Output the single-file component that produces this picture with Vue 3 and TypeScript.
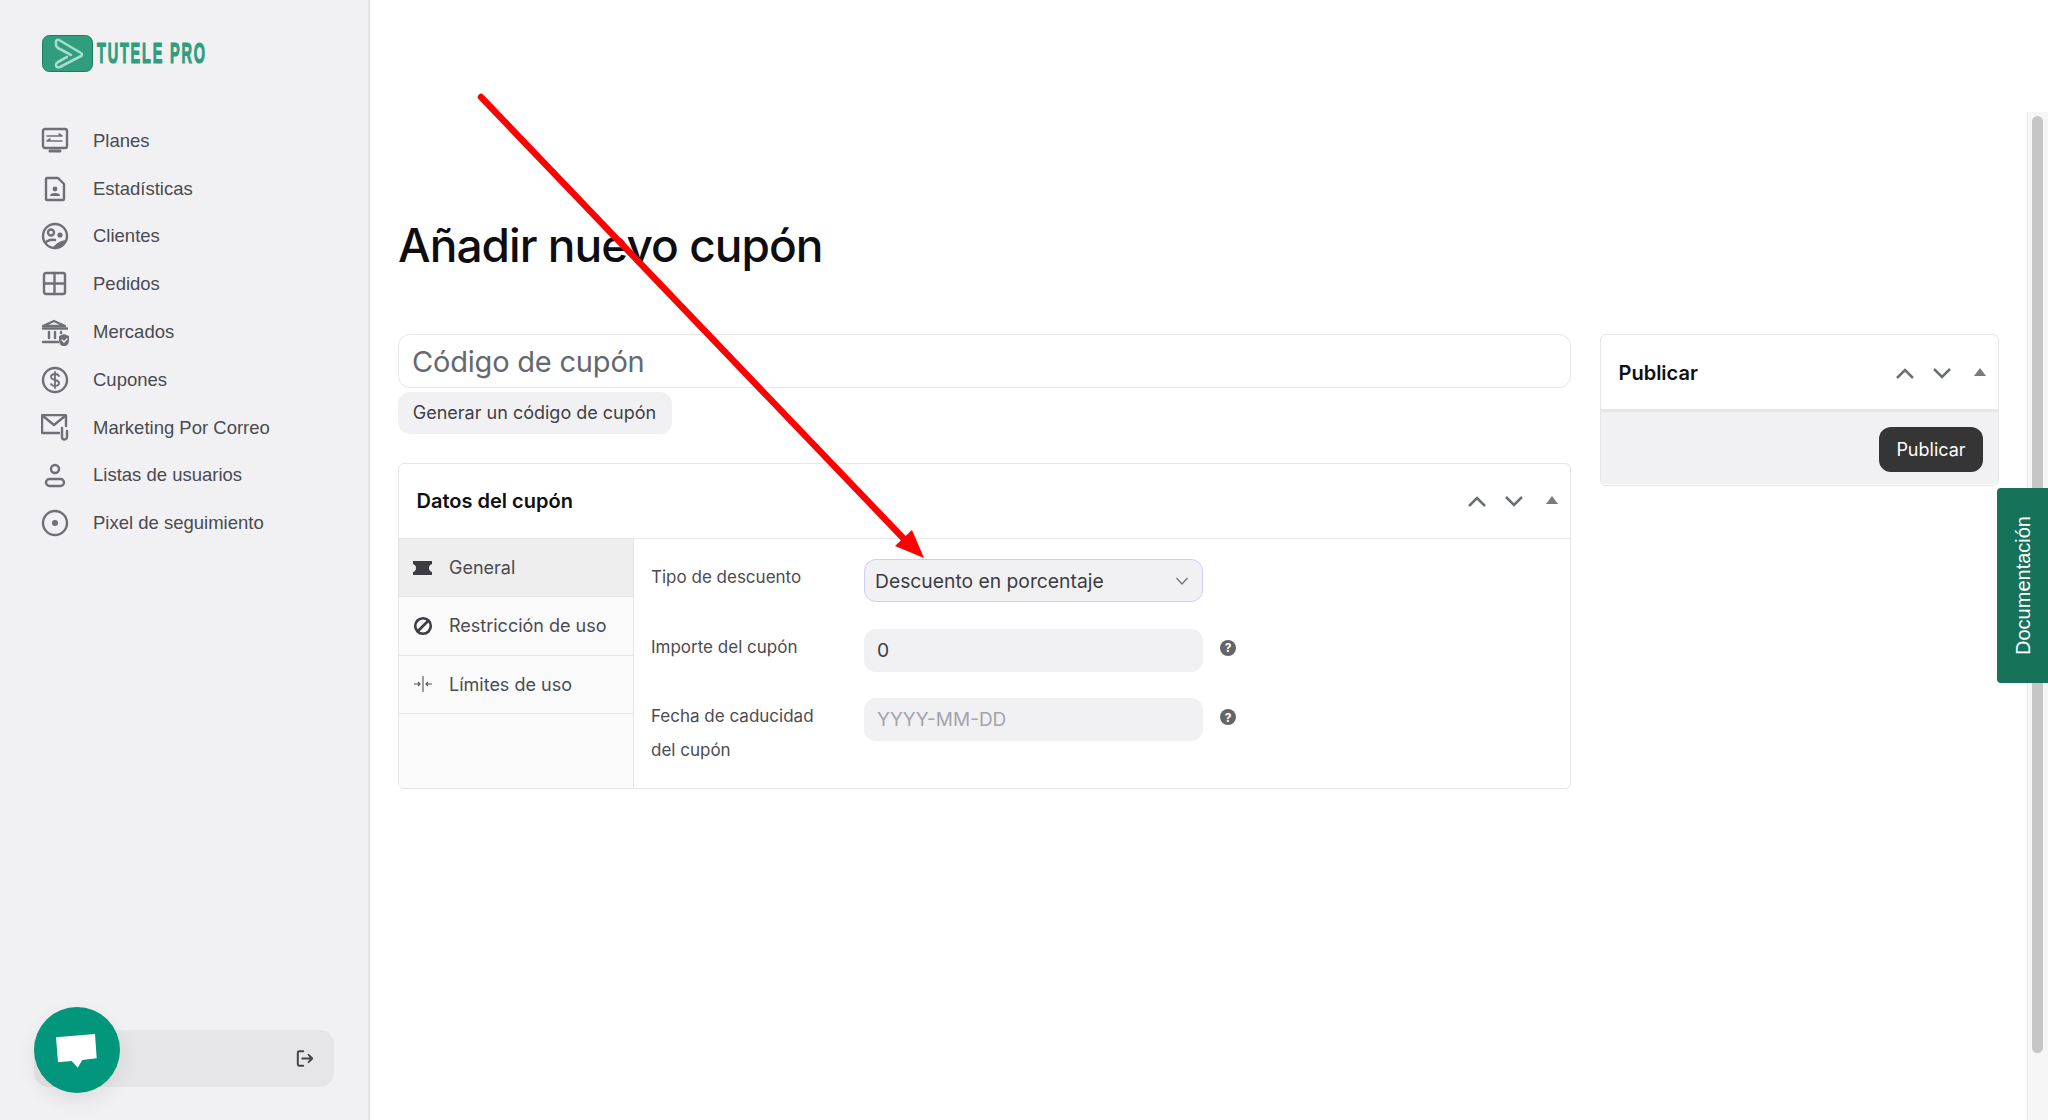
<script setup lang="ts">
const navItems = [
  { label: 'Planes', icon: 'plans' },
  { label: 'Estadísticas', icon: 'stats' },
  { label: 'Clientes', icon: 'clients' },
  { label: 'Pedidos', icon: 'orders' },
  { label: 'Mercados', icon: 'markets' },
  { label: 'Cupones', icon: 'coupons' },
  { label: 'Marketing Por Correo', icon: 'mail' },
  { label: 'Listas de usuarios', icon: 'users' },
  { label: 'Pixel de seguimiento', icon: 'pixel' }
]

const tabs = [
  { label: 'General', icon: 'ticket', active: true },
  { label: 'Restricción de uso', icon: 'ban', active: false },
  { label: 'Límites de uso', icon: 'limit', active: false }
]
</script>

<template>
  <div class="page">
    <aside class="sidebar">
      <div class="logo">
        <svg class="logo-mark" width="51" height="37" viewBox="0 0 51 37">
          <rect x="0.5" y="0.5" width="50" height="36" rx="7" fill="#2f9d7e" stroke="#1f7a60" />
          <path d="M29 20L16 13Q14 12 14 10V7Q14 4 17 5L39 18Q41 20 39 21L18 32Q14 33 14 30Q14 28 16 27L25 22" fill="none" stroke="#a9dcc9" stroke-width="2.600" stroke-linejoin="round" stroke-linecap="round" />
        </svg>
        <span class="logo-text">TUTELE PRO</span>
      </div>
      <nav class="nav">
        <a v-for="item in navItems" :key="item.label" class="nav-item">
          <span class="nav-icon">
            <svg width="28" height="28" viewBox="0 0 28 28" fill="none" stroke="#6f6f76" stroke-width="2.4" stroke-linecap="round" stroke-linejoin="round">
              <template v-if="item.icon === 'plans'">
                <rect x="2" y="2" width="24" height="19" rx="2" />
                <path d="M6 9h15M18 7l3 2M6 14h15M9 12l-3 2" stroke-width="1.6" />
                <path d="M9 24h10" stroke-width="3" />
              </template>
              <template v-else-if="item.icon === 'stats'">
                <path d="M6 3h11l6 6v15a1 1 0 0 1-1 1H6a1 1 0 0 1-1-1V4a1 1 0 0 1 1-1z" />
                <circle cx="14" cy="14" r="2.400" fill="#6f6f76" stroke="none" />
                <path d="M9 21q0-3 5-3t5 3z" fill="#6f6f76" stroke="none" />
              </template>
              <template v-else-if="item.icon === 'clients'">
                <circle cx="14" cy="14" r="12" />
                <circle cx="10" cy="10.5" r="3" />
                <circle cx="19" cy="13" r="2.6" fill="#6f6f76" stroke="none" />
                <path d="M5 20q4-3 9-2" />
                <path d="M12 25q5-6 13-7q-2 6-7 8z" fill="#6f6f76" stroke="none" />
              </template>
              <template v-else-if="item.icon === 'orders'">
                <rect x="3" y="3" width="21" height="21" rx="2" />
                <path d="M13.500 3v21M3 13.500h21" />
              </template>
              <template v-else-if="item.icon === 'markets'">
                <path d="M2 8L13 3l11 5z" />
                <path d="M2 10.500h24M8 14v6M14 14v6M20 14v1" />
                <path d="M2 24h15" />
                <path d="M23 16l5 2v5q0 4-5 6q-5-2-5-6v-5z" fill="#6f6f76" stroke="none" />
                <path d="M21 22l2 2 3-3" stroke="#fff" stroke-width="1.200" />
              </template>
              <template v-else-if="item.icon === 'coupons'">
                <circle cx="14" cy="14" r="12" />
                <path d="M18 10q-1-2-4-2t-4 2q-.5 3 4 4t4 4q-1 2-4 2t-4-2M14 6v16" stroke-width="1.800" />
              </template>
              <template v-else-if="item.icon === 'mail'">
                <path d="M18 19H2a1 1 0 0 1-1-1V2a1 1 0 0 1 1-1h22a1 1 0 0 1 1 1v10" />
                <path d="M2 2l11 9 11-9" />
                <path d="M21 14v9a2.500 2.500 0 0 0 5 0v-6" />
              </template>
              <template v-else-if="item.icon === 'users'">
                <circle cx="14" cy="8" r="4" />
                <rect x="5" y="18" width="18" height="7" rx="3.500" />
              </template>
              <template v-else>
                <circle cx="14" cy="14" r="12" />
                <circle cx="14" cy="14" r="3" fill="#6f6f76" stroke="none" />
              </template>
            </svg>
          </span>
          <span>{{ item.label }}</span>
        </a>
      </nav>
      <div class="user-bar">
        <svg width="18" height="19" viewBox="0 0 20 20" fill="none" stroke="#44444a" stroke-width="2.200" stroke-linecap="round" stroke-linejoin="round">
          <path d="M8 2H3.500A1.500 1.500 0 0 0 2 3.500v13A1.500 1.500 0 0 0 3.500 18H8" />
          <path d="M7 10h11M14 6l4 4-4 4" />
        </svg>
      </div>
      <div class="chat-bubble">
        <svg width="44" height="36" viewBox="0 0 44 36">
          <path d="M1 5.300L40 2l1.700 24.300-14.400 1.700-4.600 7.700-6-6.700-13.700 1.300z" fill="#fff" />
        </svg>
      </div>
    </aside>

    <main class="content">
      <h1 class="title">Añadir nuevo cupón</h1>
      <div class="columns">
        <section class="main-col">
          <div class="code-input">Código de cupón</div>
          <button class="gen-btn">Generar un código de cupón</button>
          <div class="card data-card">
            <header class="card-head">
              <h2>Datos del cupón</h2>
              <div class="card-tools">
                <svg width="20" height="12" viewBox="0 0 20 12"><path d="M2 11l8-8 8 8" /></svg>
                <svg width="20" height="12" viewBox="0 0 20 12"><path d="M2 2l8 8 8-8" /></svg>
                <span class="tri"></span>
              </div>
            </header>
            <div class="panel">
              <ul class="tabs">
                <li v-for="tab in tabs" :key="tab.label" class="tab" :class="{ active: tab.active }">
                  <svg width="20" height="20" viewBox="0 0 20 20">
                    <path v-if="tab.icon === 'ticket'" d="M0 3h19v3q-3 1-3 4t3 4v3H0v-3q3-1 3-4T0 6z" fill="#3c3c42" />
                    <g v-else-if="tab.icon === 'ban'" fill="none" stroke="#3c3c42" stroke-width="2.600">
                      <circle cx="10" cy="10" r="7.800" />
                      <path d="M5 15L15 5" />
                    </g>
                    <g v-else fill="none" stroke="#55555b" stroke-width="1.100">
                      <path d="M10 2v16M1 10h6M5 8l2 2-2 2M19 10h-6M15 8l-2 2 2 2" />
                    </g>
                  </svg>
                  <span>{{ tab.label }}</span>
                </li>
              </ul>
              <div class="form">
                <div class="row">
                  <label>Tipo de descuento</label>
                  <div class="field select">
                    <span>Descuento en porcentaje</span>
                    <svg width="14" height="8" viewBox="0 0 14 8" fill="none" stroke="#6e6e78" stroke-width="1.200"><path d="M1.500 1l5.500 6 5.500-6" /></svg>
                  </div>
                </div>
                <div class="row">
                  <label>Importe del cupón</label>
                  <div class="field">0</div>
                  <span class="help">?</span>
                </div>
                <div class="row">
                  <label>Fecha de caducidad del cupón</label>
                  <div class="field placeholder">YYYY-MM-DD</div>
                  <span class="help">?</span>
                </div>
              </div>
            </div>
          </div>
        </section>

        <aside class="side-col">
          <div class="card publish-card">
            <header class="card-head publish-head">
              <h2>Publicar</h2>
              <div class="card-tools">
                <svg width="20" height="12" viewBox="0 0 20 12"><path d="M2 11l8-8 8 8" /></svg>
                <svg width="20" height="12" viewBox="0 0 20 12"><path d="M2 2l8 8 8-8" /></svg>
                <span class="tri"></span>
              </div>
            </header>
            <div class="publish-foot">
              <button class="publish-btn">Publicar</button>
            </div>
          </div>
        </aside>
      </div>
    </main>

    <div class="scrollbar"><div class="thumb"></div></div>
    <div class="doc-tab"><span>Documentación</span></div>

    <svg class="arrow" width="2048" height="1120" viewBox="0 0 2048 1120">
      <path d="M481 97L905 540" stroke="#fe0000" stroke-width="6.500" stroke-linecap="round" fill="none" />
      <path d="M924 558L895 546L912 530z" fill="#fe0000" />
    </svg>
  </div>
</template>

<style>
html,
body {
  margin: 0;
  background: #fff;
}
</style>

<style scoped>
.page {
  position: relative;
  display: flex;
  width: 2048px;
  height: 1120px;
  overflow: hidden;
  background: #fff;
  font-family: Inter, "Liberation Sans", sans-serif;
  color: #3c3c42;
}

.sidebar {
  position: relative;
  box-sizing: border-box;
  flex: 0 0 370px;
  padding: 34px 0 0 41px;
  background: #f1f1f4;
  border-right: 2px solid #e4e4e6;
}

.logo {
  display: flex;
  align-items: center;
  gap: 4px;
  height: 38px;
  margin-left: 1px;
}

.logo-text {
  display: inline-block;
  font-family: "Liberation Sans", sans-serif;
  font-size: 29px;
  font-weight: 700;
  letter-spacing: 3.600px;
  color: #2f9d7e;
  white-space: nowrap;
  -webkit-text-stroke: 1.200px #2f9d7e;
  transform: scaleX(0.5);
  transform-origin: left center;
}

.nav {
  display: flex;
  flex-direction: column;
  margin-top: 45px;
}

.nav-item {
  display: flex;
  align-items: center;
  gap: 24px;
  height: 47.800px;
  font-family: "Liberation Sans", sans-serif;
  font-size: 18.500px;
  color: #4a4a50;
}

.nav-icon {
  display: flex;
  width: 28px;
  height: 28px;
}

.user-bar {
  position: absolute;
  left: 34px;
  top: 1030px;
  display: flex;
  align-items: center;
  justify-content: flex-end;
  box-sizing: border-box;
  width: 300px;
  height: 57px;
  padding-right: 20px;
  background: #e6e6e8;
  border-radius: 14px;
}

.chat-bubble {
  position: absolute;
  left: 34px;
  top: 1007px;
  display: flex;
  align-items: center;
  justify-content: center;
  width: 86px;
  height: 86px;
  background: #02967c;
  border-radius: 50%;
  box-shadow: 0 8px 20px rgba(0, 0, 0, 0.08);
}

.content {
  flex: 1;
  padding: 219px 50px 0 28px;
}

.title {
  margin: 0;
  font-size: 46px;
  line-height: 52px;
  font-weight: 500;
  letter-spacing: -0.950px;
  color: #0d0d12;
}

.columns {
  display: flex;
  align-items: flex-start;
  gap: 29px;
  margin-top: 63px;
}

.main-col {
  flex: 0 0 1173px;
}

.side-col {
  flex: 0 0 399px;
}

.code-input {
  box-sizing: border-box;
  height: 54px;
  padding-left: 13px;
  font-size: 29px;
  line-height: 54px;
  letter-spacing: -0.200px;
  color: #646970;
  border: 1.500px solid #e6e6e8;
  border-radius: 12px;
}

.gen-btn {
  display: block;
  box-sizing: border-box;
  width: 274px;
  height: 42px;
  margin-top: 4px;
  padding: 0 1px 2px 0;
  font-family: inherit;
  font-size: 18px;
  color: #3f3f45;
  background: #f1f1f4;
  border: 0;
  border-radius: 12px;
}

.card {
  box-sizing: border-box;
  background: #fff;
  border: 1.500px solid #e6e6e8;
  border-radius: 6px;
  overflow: hidden;
}

.data-card {
  margin-top: 29px;
  height: 326px;
}

.card-head {
  display: flex;
  align-items: center;
  justify-content: space-between;
  box-sizing: border-box;
  height: 75px;
  padding: 0 12px 0 17.500px;
  border-bottom: 1.500px solid #e6e6e8;
}

.card-head h2 {
  margin: 0;
  font-size: 20px;
  font-weight: 600;
  color: #0f0f14;
}

.card-tools {
  display: flex;
  align-items: center;
  gap: 17px;
}

.card-tools svg {
  fill: none;
  stroke: #6b6f76;
  stroke-width: 2.500;
}

.tri {
  width: 0;
  height: 0;
  margin-left: 5px;
  margin-bottom: 3px;
  border-left: 6px solid transparent;
  border-right: 6px solid transparent;
  border-bottom: 8px solid #787c82;
}

.panel {
  display: flex;
  height: 249px;
}

.tabs {
  flex: 0 0 234px;
  margin: 0;
  padding: 0;
  list-style: none;
  background: #fafafa;
  border-right: 1.500px solid #e6e6e8;
}

.tab {
  display: flex;
  align-items: center;
  gap: 16px;
  box-sizing: border-box;
  height: 58.300px;
  padding: 0 0 0 14px;
  font-size: 18px;
  color: #4b4b52;
  border-bottom: 1.500px solid #e6e6e8;
}

.tab.active {
  background: #eee;
}

.form {
  flex: 1;
  display: flex;
  flex-direction: column;
  gap: 26.500px;
  padding: 20px 0 0 17px;
}

.row {
  display: flex;
  align-items: flex-start;
  height: 43px;
}

.row label {
  flex: 0 0 213px;
  box-sizing: border-box;
  padding: 1px 40px 0 0;
  font-size: 17px;
  line-height: 34px;
  color: #4b4b52;
}

.field {
  box-sizing: border-box;
  display: flex;
  align-items: center;
  width: 339px;
  height: 43px;
  padding-left: 13px;
  font-size: 19.300px;
  color: #3c3c42;
  background: #f1f1f4;
  border-radius: 12px;
}

.select {
  justify-content: space-between;
  padding: 0 13px 0 10px;
  border: 1.500px solid #cfcdf3;
}

.placeholder {
  font-size: 19px;
  color: #a4a4aa;
}

.help {
  display: flex;
  align-items: center;
  justify-content: center;
  width: 16px;
  height: 16px;
  margin: 11px 0 0 17px;
  font-size: 12px;
  font-weight: 700;
  color: #fff;
  background: #646469;
  border-radius: 50%;
}

.publish-card {
  height: 152px;
}

.publish-head {
  height: 77px;
  padding-top: 2px;
  border-bottom-width: 3px;
}

.publish-foot {
  display: flex;
  justify-content: flex-end;
  box-sizing: border-box;
  height: 72px;
  padding: 15px 15px 0 0;
  background: #f1f1f4;
}

.publish-btn {
  width: 104px;
  height: 45px;
  padding: 0;
  font-family: inherit;
  font-size: 18px;
  color: #fff;
  background: #353535;
  border: 0;
  border-radius: 12px;
}

.scrollbar {
  position: absolute;
  top: 112px;
  right: 0;
  box-sizing: border-box;
  width: 21px;
  height: 1008px;
  padding: 4px 5px 0 4px;
  background: #f6f6f6;
  border-left: 1px solid #e9e9e9;
}

.thumb {
  width: 11px;
  height: 937px;
  background: #c6c6c6;
  border-radius: 6px;
}

.doc-tab {
  position: absolute;
  top: 488px;
  right: 0;
  display: flex;
  align-items: center;
  justify-content: center;
  box-sizing: border-box;
  width: 51px;
  height: 195px;
  padding-left: 2px;
  background: #17725a;
  border-radius: 4px 0 0 4px;
}

.doc-tab span {
  font-family: "Liberation Sans", sans-serif;
  font-size: 20px;
  color: #fff;
  writing-mode: vertical-rl;
  transform: rotate(180deg);
}

.arrow {
  position: absolute;
  top: 0;
  left: 0;
  pointer-events: none;
}
</style>
